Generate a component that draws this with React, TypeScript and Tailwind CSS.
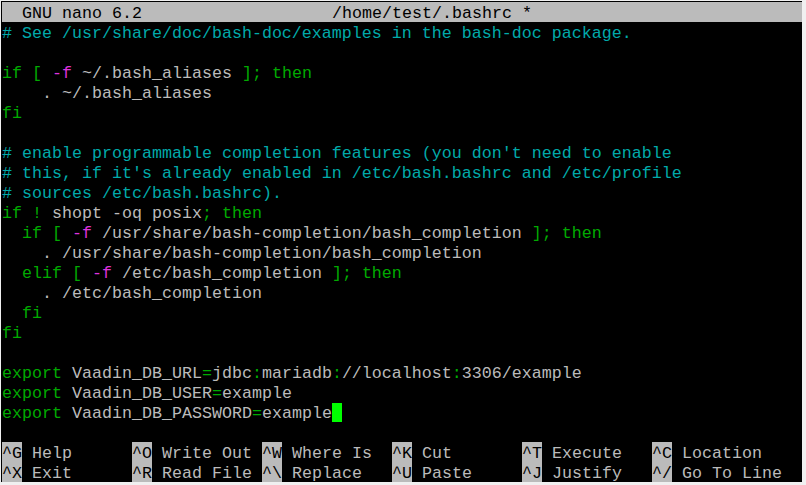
import React from "react";

type Seg = [string, string?];

const C = {
  fg: "text-[#bbbbbb]",
  cm: "text-[#00aaaa]",
  kw: "text-[#00aa00]",
  op: "text-[#dd33dd]",
};

// each line is a list of [text, colour] pieces
const lines: Seg[][] = [
  [["# See /usr/share/doc/bash-doc/examples in the bash-doc package.", C.cm]],
  [],
  [["if [", C.kw], [" "], ["-f", C.op], [" ~/.bash_aliases "], ["]; then", C.kw]],
  [["    . ~/.bash_aliases"]],
  [["fi", C.kw]],
  [],
  [["# enable programmable completion features (you don't need to enable", C.cm]],
  [["# this, if it's already enabled in /etc/bash.bashrc and /etc/profile", C.cm]],
  [["# sources /etc/bash.bashrc).", C.cm]],
  [["if !", C.kw], [" shopt -oq posix"], ["; then", C.kw]],
  [["  "], ["if [", C.kw], [" "], ["-f", C.op], [" /usr/share/bash-completion/bash_completion "], ["]; then", C.kw]],
  [["    . /usr/share/bash-completion/bash_completion"]],
  [["  "], ["elif [", C.kw], [" "], ["-f", C.op], [" /etc/bash_completion "], ["]; then", C.kw]],
  [["    . /etc/bash_completion"]],
  [["  "], ["fi", C.kw]],
  [["fi", C.kw]],
  [],
  [["export", C.kw], [" Vaadin_DB_URL"], ["=", C.kw], ["jdbc"], [":", C.kw], ["mariadb"], [":", C.kw], ["//localhost"], [":", C.kw], ["3306/example"]],
  [["export", C.kw], [" Vaadin_DB_USER"], ["=", C.kw], ["example"]],
  [["export", C.kw], [" Vaadin_DB_PASSWORD"], ["=", C.kw], ["example"]],
];

const shortcuts = [
  [["^G", "Help"], ["^O", "Write Out"], ["^W", "Where Is"], ["^K", "Cut"], ["^T", "Execute"], ["^C", "Location"]],
  [["^X", "Exit"], ["^R", "Read File"], ["^\\", "Replace"], ["^U", "Paste"], ["^J", "Justify"], ["^/", "Go To Line"]],
];

function Row({ children }: { children?: React.ReactNode }) {
  return <div className="h-[20px] leading-[24px] whitespace-pre flex">{children}</div>;
}

export default function App() {
  return (
    <div
      className="w-[806px] h-[485px] bg-[#f0f0f0] pl-[1px] pt-[1px] overflow-hidden"
      style={{ fontFamily: '"Liberation Mono", "Courier New", monospace' }}
    >
      <div className="w-[801px] h-[481px] bg-black pl-[1px] pt-[1px] text-[16.667px] text-[#bbbbbb]">
        <div className="w-[800px] h-[20px] leading-[24px] whitespace-pre bg-[#bbbbbb] text-black flex">
          <span className="w-[330px]">{"  GNU nano 6.2"}</span>
          <span>/home/test/.bashrc *</span>
        </div>

        {lines.map((segs, i) => (
          <Row key={i}>
            {segs.map(([t, c], j) => (
              <span key={j} className={c ?? C.fg}>
                {t}
              </span>
            ))}
            {i === lines.length - 1 && <span className="w-[10px] h-[19px] mt-[1px] bg-[#00ff00]" />}
          </Row>
        ))}

        <Row />

        {shortcuts.map((row, i) => (
          <Row key={i}>
            {row.map(([k, label]) => (
              <span key={k} className="w-[130px] flex">
                <span className="bg-[#bbbbbb] text-black">{k}</span>
                <span className="pl-[10px]">{label}</span>
              </span>
            ))}
          </Row>
        ))}
      </div>
    </div>
  );
}
